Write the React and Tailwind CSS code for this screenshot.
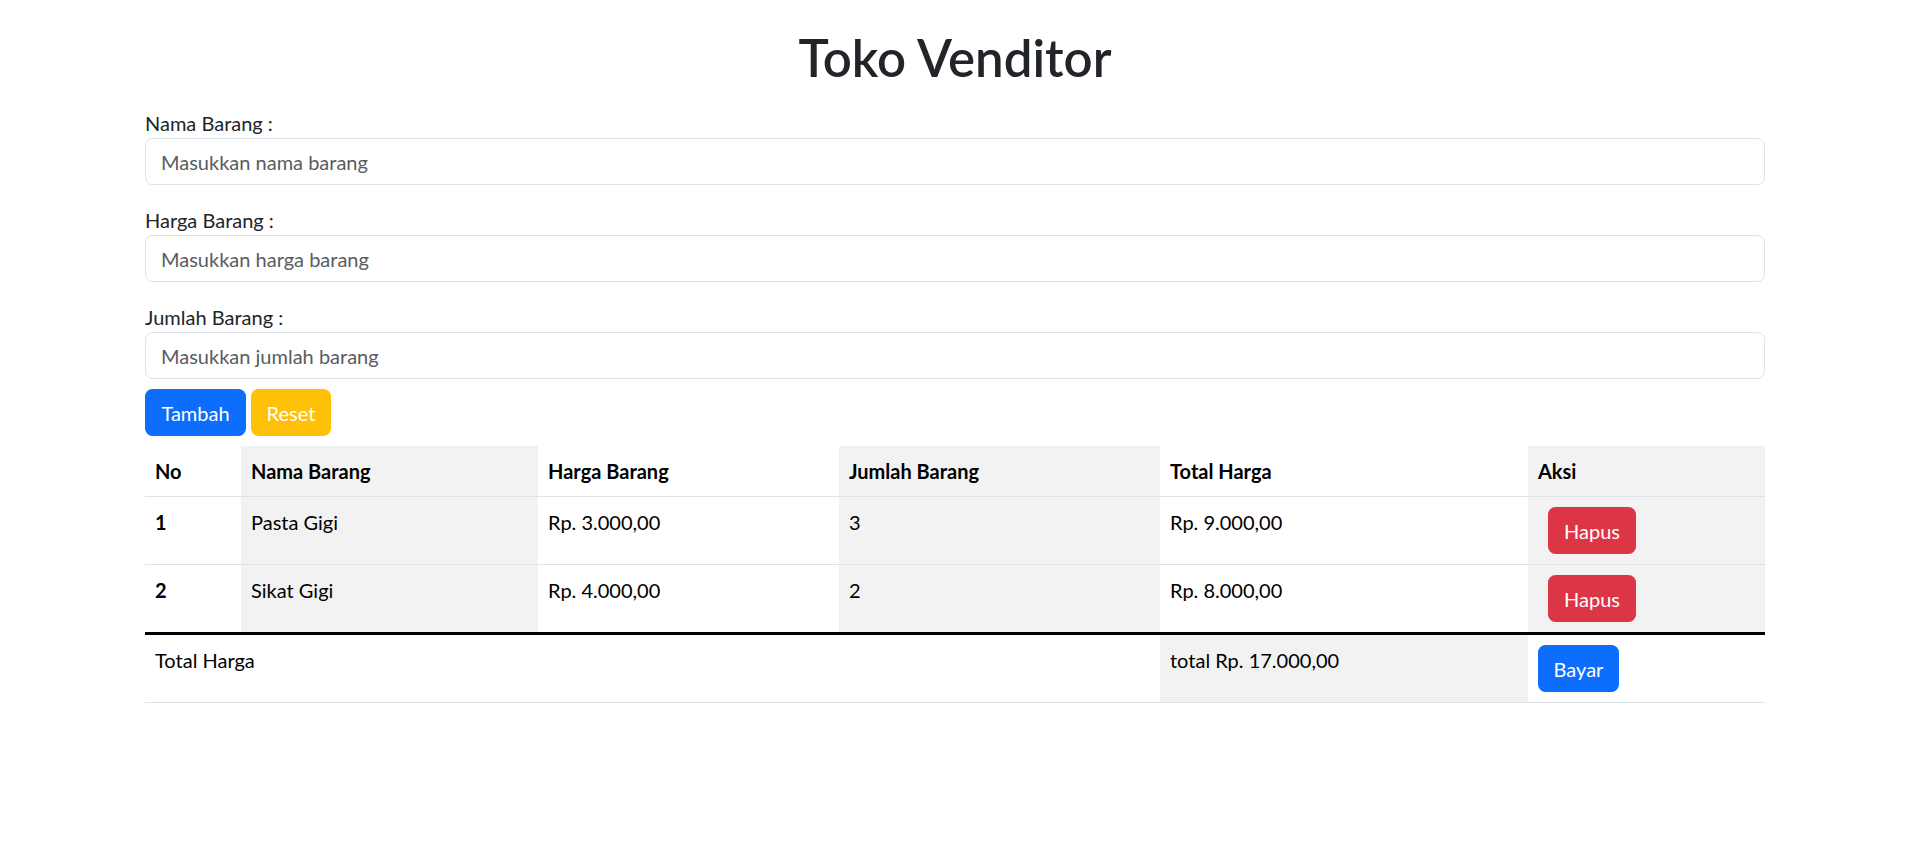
import React from "react";

const fields = [
  { label: "Nama Barang :", ph: "Masukkan nama barang" },
  { label: "Harga Barang :", ph: "Masukkan harga barang" },
  { label: "Jumlah Barang :", ph: "Masukkan jumlah barang" },
];

const rows = [
  { no: 1, nama: "Pasta Gigi", harga: "Rp. 3.000,00", jumlah: "3", total: "Rp. 9.000,00" },
  { no: 2, nama: "Sikat Gigi", harga: "Rp. 4.000,00", jumlah: "2", total: "Rp. 8.000,00" },
];

export default function App() {
  return (
    <div
      className="min-h-screen bg-white text-[#212529]"
      style={{ fontFamily: "Lato, 'Noto Sans', sans-serif" }}
    >
      <div className="ml-[145px] w-[1620px] pt-[28px]">
        <h1 className="mb-[20px] text-center text-[51px] font-semibold leading-[60px] text-[#212529]">
          Toko Venditor
        </h1>

        {fields.map((f, i) => (
          <div key={f.label} className={i < 2 ? "mb-[20px]" : "mb-[10px]"}>
            <label className="block text-[20px] leading-[30px]">{f.label}</label>
            <input
              type="text"
              placeholder={f.ph}
              className="block h-[47px] w-full rounded-[7.5px] border border-[#dee2e6] bg-white px-[15px] text-[20px] leading-[30px] text-[#212529] outline-none placeholder:text-[#595c5f]"
            />
          </div>
        ))}

        <div className="flex gap-[5px]">
          <button className="h-[47px] w-[101px] rounded-[7.5px] bg-[#0d6efd] text-[20px] leading-[30px] text-white">
            Tambah
          </button>
          <button className="h-[47px] w-[80px] rounded-[7.5px] bg-[#ffc107] text-[20px] leading-[30px] text-white">
            Reset
          </button>
        </div>

        <table className="mt-[10px] w-full table-fixed border-collapse text-[20px] leading-[30px] text-black">
          <colgroup>
            <col className="w-[96px]" />
            <col className="w-[297px]" />
            <col className="w-[301px]" />
            <col className="w-[321px]" />
            <col className="w-[368px]" />
            <col className="w-[237px]" />
          </colgroup>
          <thead>
            <tr>
              <th className="border-b border-[#dee2e6] p-[10px] text-left align-top font-bold">No</th>
              <th className="border-b border-[#dee2e6] bg-[#f2f2f2] p-[10px] text-left align-top font-bold">Nama Barang</th>
              <th className="border-b border-[#dee2e6] p-[10px] text-left align-top font-bold">Harga Barang</th>
              <th className="border-b border-[#dee2e6] bg-[#f2f2f2] p-[10px] text-left align-top font-bold">Jumlah Barang</th>
              <th className="border-b border-[#dee2e6] p-[10px] text-left align-top font-bold">Total Harga</th>
              <th className="border-b border-[#dee2e6] bg-[#f2f2f2] p-[10px] text-left align-top font-bold">Aksi</th>
            </tr>
          </thead>
          <tbody>
            {rows.map((r) => (
              <tr key={r.no}>
                <th className="border-b border-[#dee2e6] p-[10px] text-left align-top font-bold">{r.no}</th>
                <td className="border-b border-[#dee2e6] bg-[#f2f2f2] p-[10px] align-top">{r.nama}</td>
                <td className="border-b border-[#dee2e6] p-[10px] align-top">{r.harga}</td>
                <td className="border-b border-[#dee2e6] bg-[#f2f2f2] p-[10px] align-top">{r.jumlah}</td>
                <td className="border-b border-[#dee2e6] p-[10px] align-top">{r.total}</td>
                <td className="border-b border-[#dee2e6] bg-[#f2f2f2] p-[10px] align-top">
                  <button className="ml-[10px] block h-[47px] w-[88px] rounded-[7.5px] bg-[#dc3545] text-[20px] leading-[30px] text-white">
                    Hapus
                  </button>
                </td>
              </tr>
            ))}
          </tbody>
          <tfoot>
            <tr>
              <td colSpan={4} className="border-t-[3px] border-b border-t-black border-b-[#dee2e6] p-[10px] align-top">
                Total Harga
              </td>
              <td className="border-t-[3px] border-b border-t-black border-b-[#dee2e6] bg-[#f2f2f2] p-[10px] align-top">
                total Rp. 17.000,00
              </td>
              <td className="border-t-[3px] border-b border-t-black border-b-[#dee2e6] p-[10px] align-top">
                <button className="block h-[47px] w-[81px] rounded-[7.5px] bg-[#0d6efd] text-[20px] leading-[30px] text-white">
                  Bayar
                </button>
              </td>
            </tr>
          </tfoot>
        </table>
      </div>
    </div>
  );
}
